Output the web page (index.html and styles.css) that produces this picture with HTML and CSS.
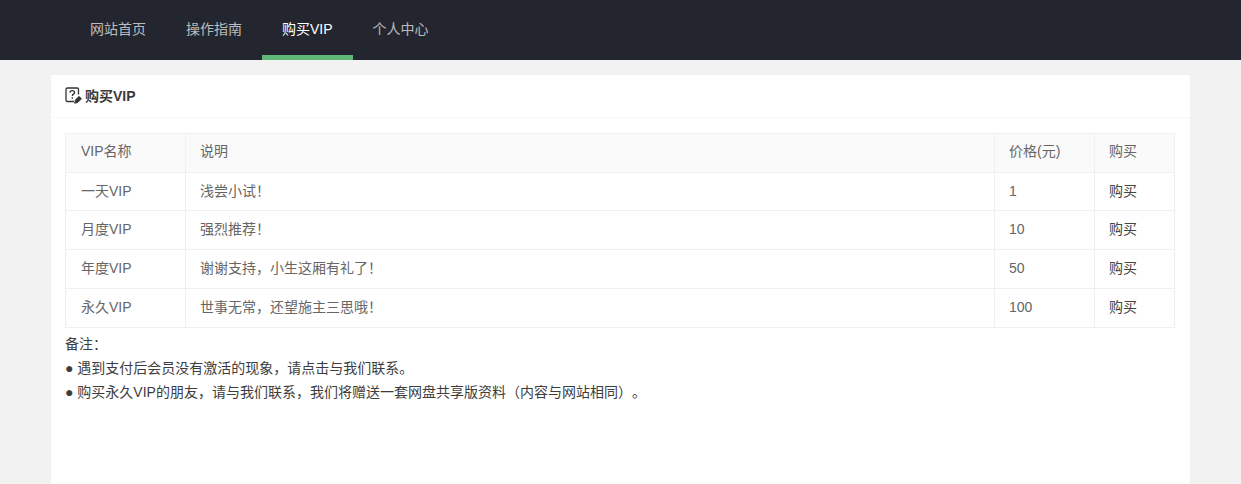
FILE: index.html
```html
<!DOCTYPE html>
<html lang="zh-CN">
<head>
<meta charset="utf-8">
<title>购买VIP</title>
<link rel="stylesheet" href="styles.css">
</head>
<body>
<header class="topbar">
  <nav class="nav">
    <a class="nav-item" href="#">网站首页</a>
    <a class="nav-item" href="#">操作指南</a>
    <a class="nav-item active" href="#">购买VIP</a>
    <a class="nav-item" href="#">个人中心</a>
  </nav>
</header>
<main class="page">
  <section class="card">
    <h2 class="card-header">
      <svg class="icon" width="17" height="17" viewBox="0 0 17 17" fill="none" stroke="#333" stroke-width="1.3">
        <path d="M9 14.500H2.300C1.500 14.500 1 14 1 13.200V2.300C1 1.500 1.500 1 2.300 1H12.200C13 1 13.500 1.500 13.500 2.300V7.500"/>
        <path d="M5 5.500C5.200 3 9.500 3.100 9.500 5.500C9.500 7.300 7.300 7 7.300 9"/>
        <path d="M7.300 10.300V11.800"/>
        <path d="M9.700 16.300L10.300 13L14 9.300L16.500 11.800L12.800 15.500Z" fill="#333" stroke-width="0.8"/>
      </svg>
      <span>购买VIP</span>
    </h2>
    <div class="card-body">
      <table class="table">
        <colgroup>
          <col class="col-name"><col><col class="col-price"><col class="col-buy">
        </colgroup>
        <thead>
          <tr><th>VIP名称</th><th>说明</th><th>价格(元)</th><th>购买</th></tr>
        </thead>
        <tbody>
          <tr class="row-short"><td>一天VIP</td><td>浅尝小试！</td><td>1</td><td><a href="#">购买</a></td></tr>
          <tr><td>月度VIP</td><td>强烈推荐！</td><td>10</td><td><a href="#">购买</a></td></tr>
          <tr><td>年度VIP</td><td>谢谢支持，小生这厢有礼了！</td><td>50</td><td><a href="#">购买</a></td></tr>
          <tr><td>永久VIP</td><td>世事无常，还望施主三思哦！</td><td>100</td><td><a href="#">购买</a></td></tr>
        </tbody>
      </table>
      <div class="notes">
        <p>备注：</p>
        <p>● 遇到支付后会员没有激活的现象，请点击与我们联系。</p>
        <p>● 购买永久VIP的朋友，请与我们联系，我们将赠送一套网盘共享版资料（内容与网站相同）。</p>
      </div>
    </div>
  </section>
</main>
</body>
</html>
```
FILE: styles.css
```css
* { box-sizing: border-box; }
html, body { margin: 0; padding: 0; height: 100%; overflow: hidden; }
body {
  background: #f2f2f2;
  color: #666;
  font: 14px/24px "Liberation Sans", "Noto Sans CJK SC", sans-serif;
  text-spacing-trim: space-all;
}
a { color: inherit; text-decoration: none; }
.topbar { height: 60px; background: #23262e; padding-left: 70px; }
.nav { display: flex; height: 60px; }
.nav-item {
  padding: 0 20px;
  height: 60px;
  line-height: 58px;
  font-size: 14px;
  color: rgba(255, 255, 255, .7);
}
.nav-item.active { color: #fff; border-bottom: 5px solid #5fb878; }
.page { padding: 15px 51px 0; height: 424px; }
.card { background: #fff; border-radius: 2px; height: 100%; width: 1139px; }
.card-header {
  display: flex;
  align-items: center;
  gap: 3px;
  height: 43px;
  margin: 0;
  padding: 0 14px;
  border-bottom: 1px solid #f6f6f6;
  color: #3a3a3a;
  font-size: 14px;
  font-weight: bold;
}
.icon { flex: none; margin-top: -2px; }
.card-body { padding: 15px 14px 0; }
.table {
  width: 1110px;
  border-collapse: collapse;
  table-layout: fixed;
}
.col-name { width: 120px; }
.col-price { width: 100px; }
.col-buy { width: 80px; }
.table th, .table td {
  height: 39px;
  padding: 0 15px 2px;
  border: 1px solid #f0f0f0;
  text-align: left;
  font-weight: 400;
  font-size: 14px;
  line-height: 20px;
  color: #666;
}
.table th + th, .table td + td { padding-left: 14px; }
.table th { background: #fafafa; padding-bottom: 4px; }
.table .row-short td { height: 38px; }
.table td a { color: #444; }
.notes { color: #3d3d3d; padding-top: 4px; }
.notes p { margin: 0; }
```
